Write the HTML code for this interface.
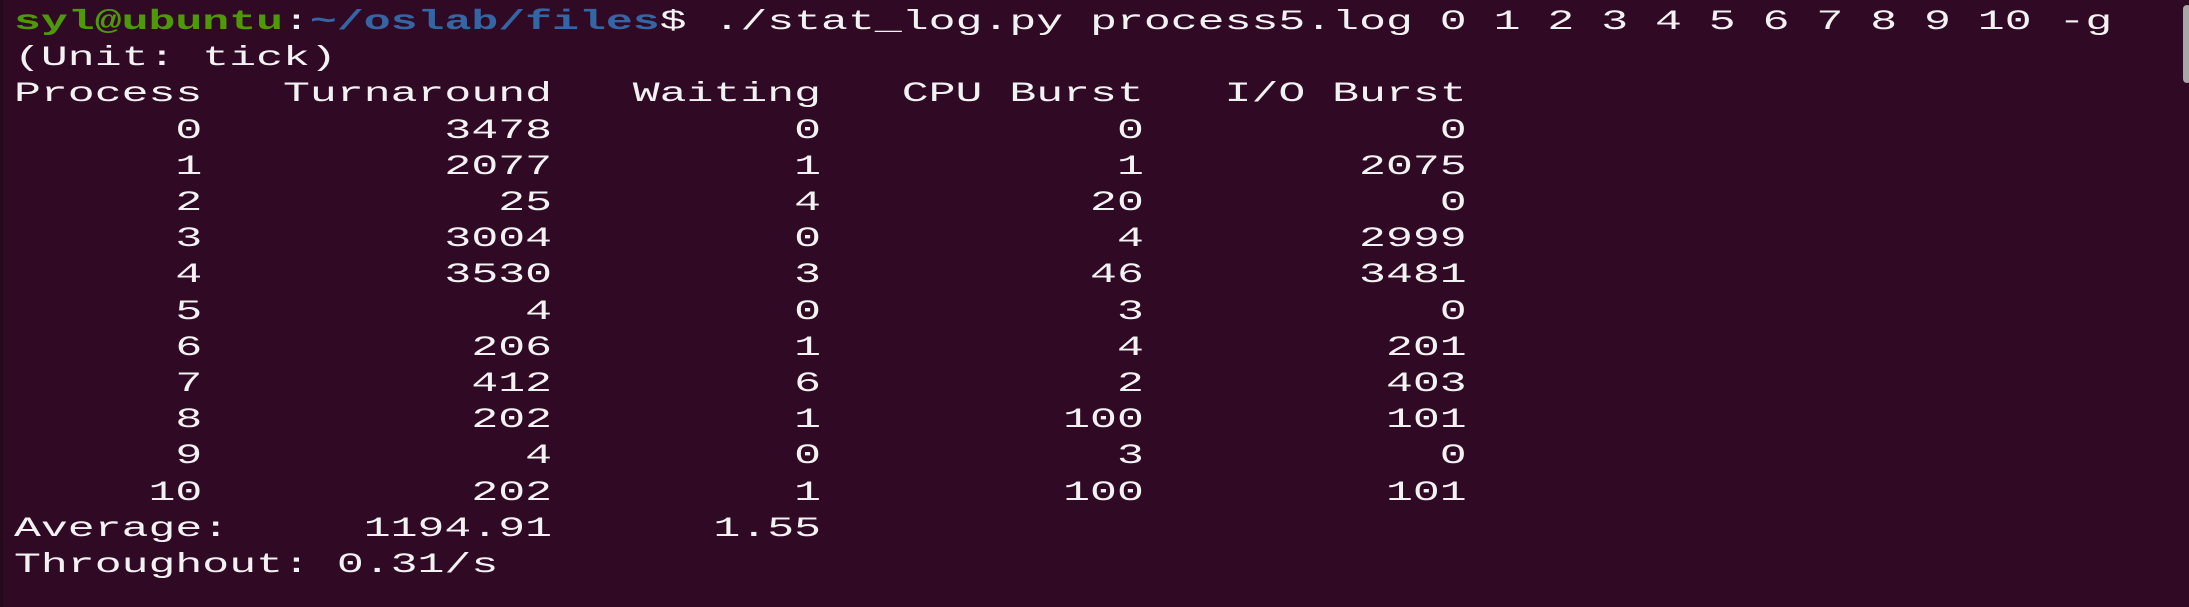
<!DOCTYPE html>
<html><head><meta charset="utf-8"><style>
html,body{margin:0;padding:0;background:#300a24;width:2189px;height:607px;overflow:hidden;}
pre{position:absolute;left:14px;top:5px;margin:0;font-family:"Liberation Mono",monospace;font-size:28px;line-height:36.2px;color:#f2f2f2;transform:scaleX(1.601);transform-origin:0 0;white-space:pre;}
.g{color:#4e9a06;font-weight:bold}.b{color:#3465a4;font-weight:bold}
.sb{position:absolute;left:2183px;top:5px;width:8px;height:78px;background:#a8a8a8;border-radius:4px;}
.le{position:absolute;left:0;top:0;width:3px;height:607px;background:#24081b;}
</style></head><body>
<div class="le"></div>
<pre><span class="g">syl@ubuntu</span>:<span class="b">~/oslab/files</span>$ ./stat_log.py process5.log 0 1 2 3 4 5 6 7 8 9 10 -g
(Unit: tick)
Process   Turnaround   Waiting   CPU Burst   I/O Burst
      0         3478         0           0           0
      1         2077         1           1        2075
      2           25         4          20           0
      3         3004         0           4        2999
      4         3530         3          46        3481
      5            4         0           3           0
      6          206         1           4         201
      7          412         6           2         403
      8          202         1         100         101
      9            4         0           3           0
     10          202         1         100         101
Average:     1194.91      1.55
Throughout: 0.31/s</pre>
<div class="sb"></div>
</body></html>
